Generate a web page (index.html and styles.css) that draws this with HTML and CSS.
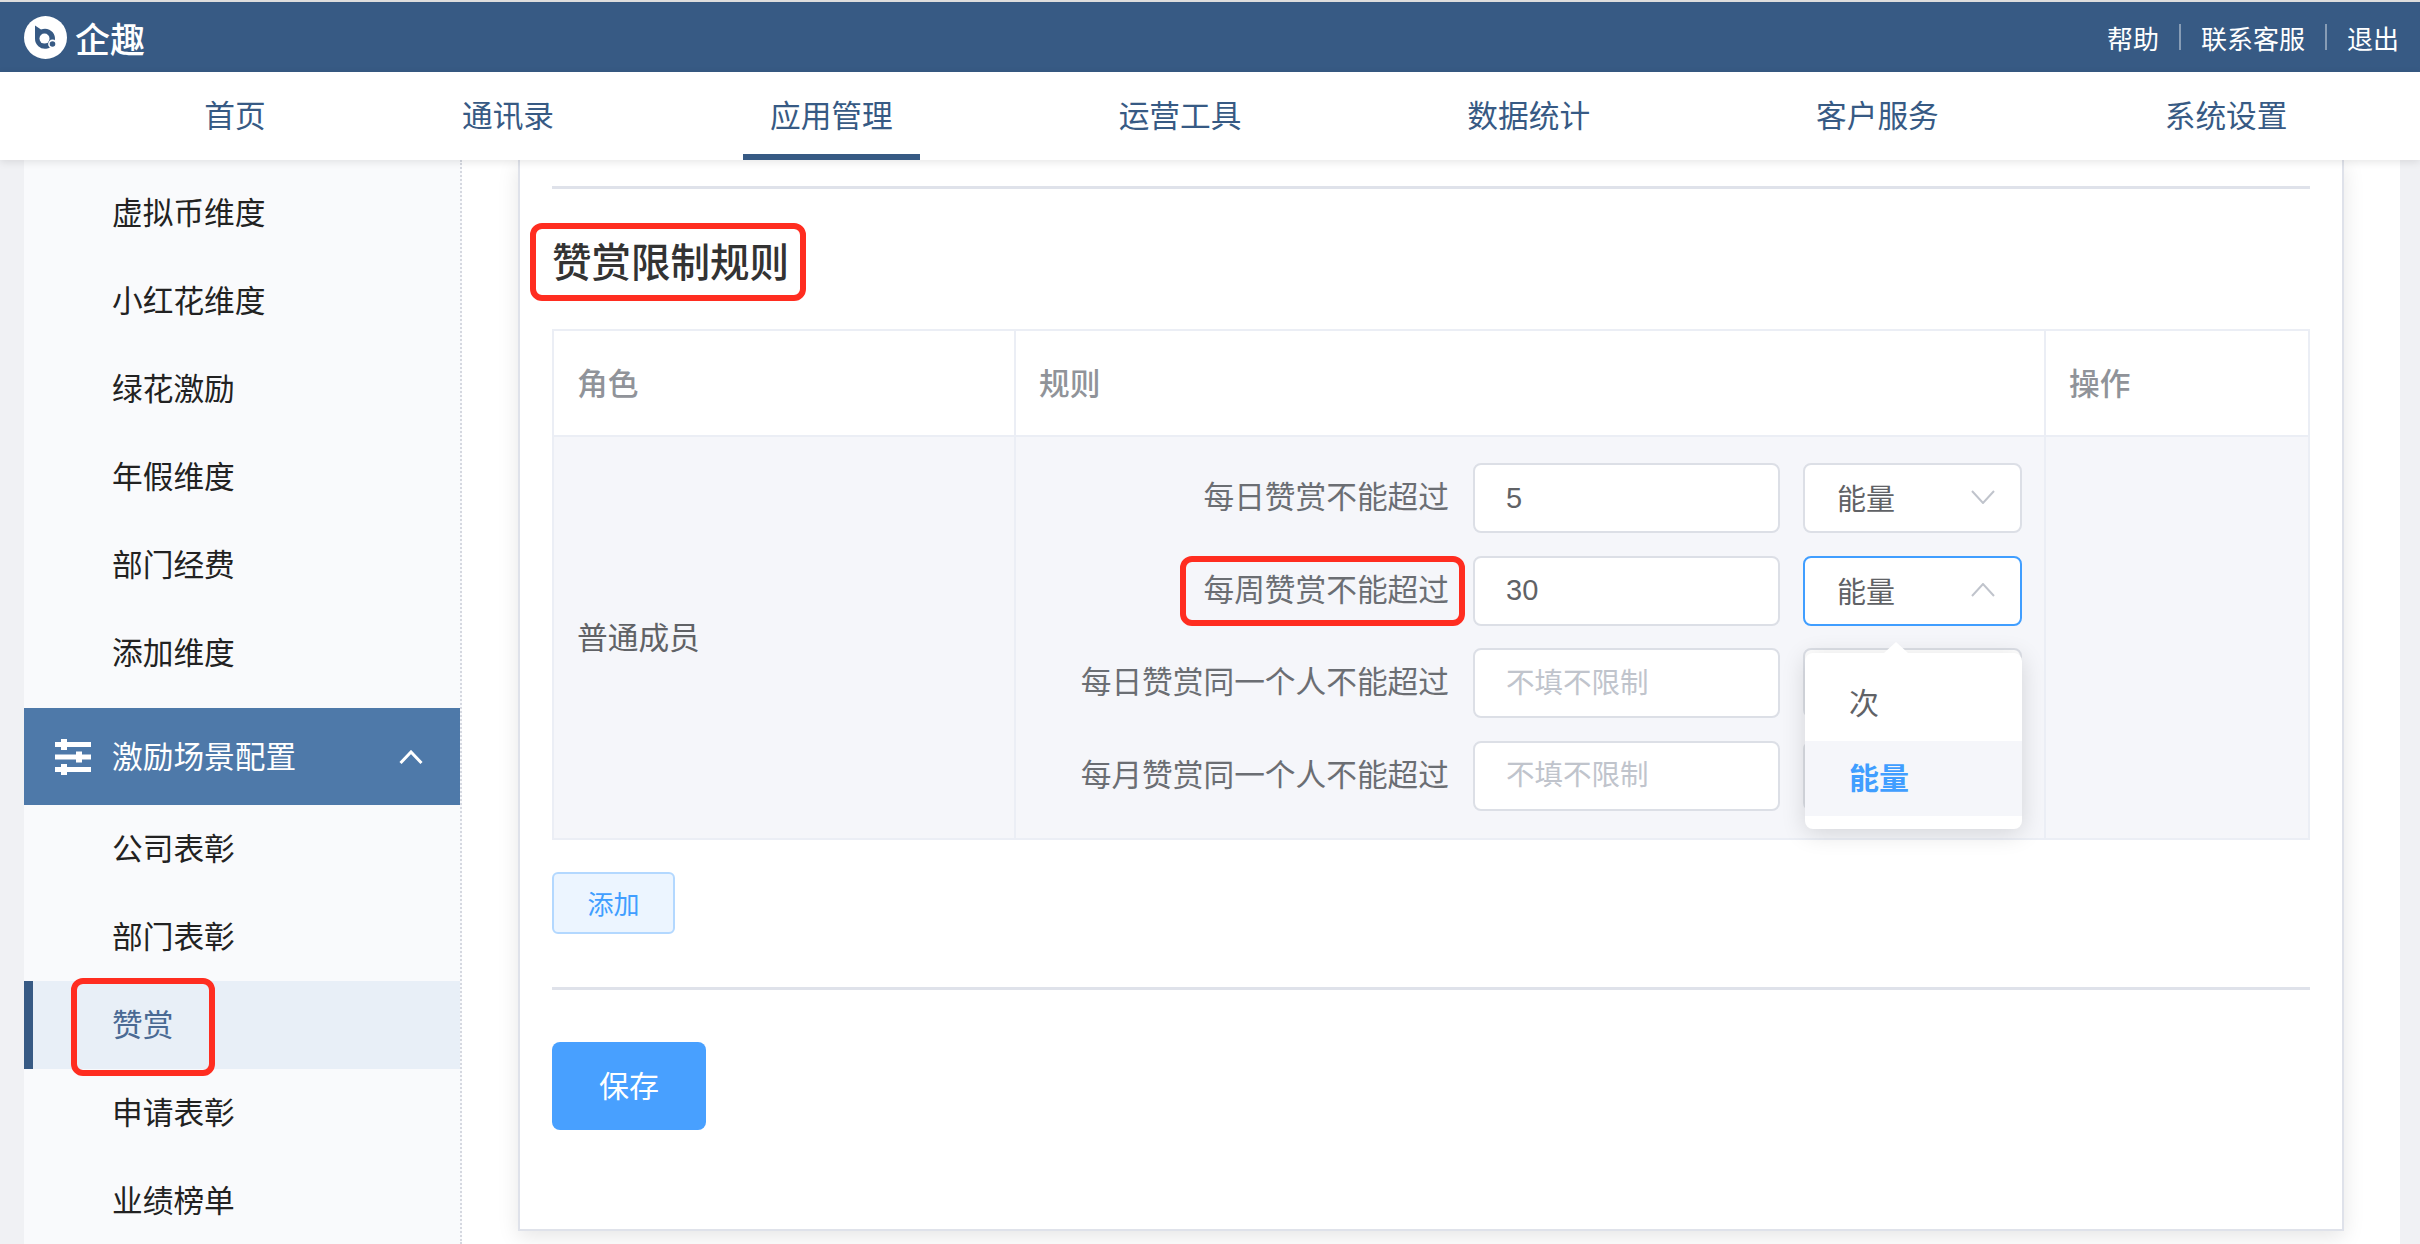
FILE: index.html
```html
<!DOCTYPE html>
<html lang="zh-CN">
<head>
    <meta charset="UTF-8">
    <title>企趣 - 应用管理</title>
    <link rel="stylesheet" href="styles.css">
</head>
<body>

<!-- Top bar -->
<div class="topbar">
    <div class="logo">
        <svg class="logo-icon" width="43" height="43" viewBox="0 0 43 43">
            <circle cx="21.5" cy="21.5" r="21.5" fill="#fff"/>
            <path d="M11 9.5 L17 13.6 A10 10 0 1 1 11 22.6 Z" fill="#375a84"/>
            <circle cx="20.5" cy="22.6" r="5" fill="#fff"/>
            <circle cx="28.5" cy="28" r="3.6" fill="#375a84" stroke="#fff" stroke-width="1.6"/>
        </svg>
        <span class="logo-text">企趣</span>
    </div>
    <div class="top-links">
        <a>帮助</a>
        <i class="top-sep"></i>
        <a>联系客服</a>
        <i class="top-sep"></i>
        <a>退出</a>
    </div>
</div>

<!-- Main nav -->
<div class="nav">
    <a class="nav-item">首页</a>
    <a class="nav-item">通讯录</a>
    <a class="nav-item active">应用管理</a>
    <a class="nav-item">运营工具</a>
    <a class="nav-item">数据统计</a>
    <a class="nav-item">客户服务</a>
    <a class="nav-item">系统设置</a>
</div>

<div class="layout">
    <!-- Sidebar -->
    <div class="sidebar">
        <div class="side-list first">
            <div class="side-item">虚拟币维度</div>
            <div class="side-item">小红花维度</div>
            <div class="side-item">绿花激励</div>
            <div class="side-item">年假维度</div>
            <div class="side-item">部门经费</div>
            <div class="side-item">添加维度</div>
        </div>
        <div class="side-group">
            <svg class="group-icon" width="36" height="36" viewBox="0 0 36 36" fill="#fff">
                <rect x="0" y="3" width="36" height="5"/>
                <rect x="6" y="0" width="6" height="11"/>
                <rect x="0" y="15.5" width="36" height="5"/>
                <rect x="21" y="12.5" width="6" height="11"/>
                <rect x="0" y="28" width="36" height="5"/>
                <rect x="6" y="25" width="6" height="11"/>
            </svg>
            <span class="group-text">激励场景配置</span>
            <svg class="group-arrow" width="24" height="14" viewBox="0 0 24 14" fill="none" stroke="#fff" stroke-width="3">
                <path d="M1.5 13 L12 2 L22.5 13"/>
            </svg>
        </div>
        <div class="side-list">
            <div class="side-item">公司表彰</div>
            <div class="side-item">部门表彰</div>
            <div class="side-item selected"><span class="side-mark">赞赏</span></div>
            <div class="side-item">申请表彰</div>
            <div class="side-item">业绩榜单</div>
        </div>
    </div>

    <!-- Content -->
    <div class="main">
        <div class="card">
            <hr class="line">
            <h2 class="title"><span class="title-text">赞赏限制规则</span></h2>

            <table class="rule-table">
                <thead>
                    <tr>
                        <th class="col-role">角色</th>
                        <th class="col-rule">规则</th>
                        <th class="col-op">操作</th>
                    </tr>
                </thead>
                <tbody>
                    <tr>
                        <td class="role-cell">普通成员</td>
                        <td class="rule-cell">
                            <div class="rule-row">
                                <label class="rule-label">每日赞赏不能超过</label>
                                <input class="rule-input" type="text" value="5">
                                <div class="select">
                                    <span>能量</span>
                                    <svg class="select-arrow" width="24" height="14" viewBox="0 0 24 14" fill="none" stroke="#c0c4cc" stroke-width="2">
                                        <path d="M1 1 L12 13 L23 1"/>
                                    </svg>
                                </div>
                            </div>
                            <div class="rule-row">
                                <label class="rule-label"><span class="label-mark">每周赞赏不能超过</span></label>
                                <input class="rule-input" type="text" value="30">
                                <div class="select open">
                                    <span>能量</span>
                                    <svg class="select-arrow" width="24" height="14" viewBox="0 0 24 14" fill="none" stroke="#c0c4cc" stroke-width="2">
                                        <path d="M1 13 L12 1 L23 13"/>
                                    </svg>
                                    <!-- Dropdown for the open select -->
                                    <div class="dropdown">
                                        <div class="option">次</div>
                                        <div class="option current">能量</div>
                                    </div>
                                </div>
                            </div>
                            <div class="rule-row">
                                <label class="rule-label">每日赞赏同一个人不能超过</label>
                                <input class="rule-input" type="text" placeholder="不填不限制">
                                <div class="select"></div>
                            </div>
                            <div class="rule-row">
                                <label class="rule-label">每月赞赏同一个人不能超过</label>
                                <input class="rule-input" type="text" placeholder="不填不限制">
                                <div class="select"></div>
                            </div>
                        </td>
                        <td></td>
                    </tr>
                </tbody>
            </table>

            <button class="add-btn">添加</button>
            <hr class="line light">
            <button class="save-btn">保存</button>
        </div>
    </div>
</div>

</body>
</html>
```

FILE: styles.css
```css
* {
    box-sizing: border-box;
}

html, body {
    height: 1244px;
    overflow: hidden;
}

body {
    margin: 0;
    background-color: #f0f1f4;
    font-family: "Liberation Sans", "Noto Sans CJK SC", sans-serif;
    font-size: 30.7px;
    color: #222;
}

/* Top bar */
.topbar {
    height: 72px;
    border-top: 2px solid #ddd;
    background-color: #375a84;
    display: flex;
    align-items: center;
    justify-content: space-between;
    padding: 0 21px 0 24px;
    color: #fff;
}

.logo {
    display: flex;
    align-items: center;
    gap: 8px;
}

.logo-text {
    font-size: 35px;
    font-weight: 500;
}

.top-links {
    display: flex;
    align-items: center;
    gap: 20px;
    font-size: 26px;
}

.top-sep {
    width: 2px;
    height: 26px;
    background-color: rgba(255, 255, 255, 0.4);
}

/* Main nav */
.nav {
    position: relative;
    z-index: 2;
    height: 88px;
    background-color: #fff;
    box-shadow: 0 2px 8px rgba(0, 0, 0, 0.1);
    display: grid;
    grid-template-columns: 248px 298px repeat(5, 348.7px);
    padding-left: 111px;
    color: #375a84;
}

.nav-item {
    justify-self: center;
    height: 88px;
    line-height: 90px;
    padding: 0 27px;
}

.nav-item.active {
    border-bottom: 6px solid #375a84;
}

/* Sidebar */
.layout {
    display: flex;
    height: 1084px;
    padding: 0 20px 0 24px;
}

.sidebar {
    width: 438px;
    flex-shrink: 0;
    background-color: #f9fafc;
    border-right: 2px dotted #d5d8e0;
}

.side-list.first {
    padding-top: 9px;
    margin-bottom: 11px;
}

.side-item {
    height: 88px;
    line-height: 90px;
    padding-left: 88px;
}

.side-item.selected {
    padding-left: 79px;
    background-color: #e8eff7;
    border-left: 9px solid #375a84;
    color: #4a6a94;
}

.side-mark {
    position: relative;
    display: inline-block;
}

.side-mark::after {
    content: "";
    position: absolute;
    top: -3px;
    bottom: -5px;
    left: -41px;
    right: -42px;
    border: 6px solid #ff2d20;
    border-radius: 12px;
}

.side-group {
    height: 97px;
    background-color: #4e79a9;
    color: #fff;
    display: flex;
    align-items: center;
    padding: 0 37px 0 31px;
}

.group-icon {
    margin-right: 21px;
}

.group-text {
    padding-bottom: 4px;
}

.group-arrow {
    margin-left: auto;
}

/* Content */
.main {
    flex: 1;
    background-color: #fff;
    padding: 0 56px 0 56px;
}

.card {
    height: 1071px;
    background-color: #fff;
    border-left: 2px solid #dfe2ea;
    border-right: 2px solid #dfe2ea;
    border-bottom: 2px solid #dfe2ea;
    box-shadow: 0 6px 20px rgba(0, 0, 0, 0.1);
    padding: 26px 32px 0 32px;
}

.line {
    margin: 0;
    border: none;
    height: 3px;
    background-color: #dfe2ea;
}

.line.light {
    margin: 53px 0 52px;
}

.title {
    margin: 46px 0 38px;
    height: 56px;
    line-height: 56px;
    font-size: 39.5px;
    font-weight: 500;
    color: #333;
}

.title-text {
    position: relative;
    display: inline-block;
}

.title-text::after {
    content: "";
    position: absolute;
    top: -12px;
    bottom: -10px;
    left: -22px;
    right: -17px;
    border: 6px solid #ff2d20;
    border-radius: 12px;
}

/* Rule table */
.rule-table {
    width: 100%;
    border-collapse: collapse;
    table-layout: fixed;
    border: 2px solid #ebeef5;
}

.rule-table th,
.rule-table td {
    border: 2px solid #ebeef5;
    padding: 0 0 0 23px;
    text-align: left;
    color: #606266;
}

.rule-table th {
    height: 106px;
    padding-bottom: 4px;
    background-color: #fff;
    color: #909399;
    font-weight: 500;
}

.rule-table td {
    background-color: #f5f6fa;
}

.rule-table td.role-cell {
    padding-bottom: 4px;
}

.col-role {
    width: 462px;
}

.col-op {
    width: 264px;
}

.rule-table td.rule-cell {
    padding: 26px 22px 27px 0;
}

.rule-row {
    display: flex;
    align-items: center;
    gap: 23px;
    height: 70px;
    margin-bottom: 22.5px;
}

.rule-row:last-child {
    margin-bottom: 0;
}

.rule-label {
    flex: 1;
    text-align: right;
    line-height: 70px;
    color: #6b6e73;
    margin-right: 1px;
}

.label-mark {
    position: relative;
    display: inline-block;
}

.label-mark::after {
    content: "";
    position: absolute;
    top: 0;
    bottom: 0;
    left: -23px;
    right: -16px;
    border: 6px solid #ff2d20;
    border-radius: 12px;
}

.rule-input {
    width: 307px;
    height: 70px;
    padding: 0 31px;
    border: 2px solid #dcdfe6;
    border-radius: 8px;
    background-color: #fff;
    font: inherit;
    font-size: 29px;
    color: #606266;
}

.rule-input::placeholder {
    color: #c0c4cc;
    font-size: 28.5px;
}

.select {
    position: relative;
    width: 219px;
    height: 70px;
    padding: 0 25px 2px 32px;
    border: 2px solid #dcdfe6;
    border-radius: 8px;
    background-color: #fff;
    color: #606266;
    font-size: 29px;
    display: flex;
    align-items: center;
    justify-content: space-between;
}

.select.open {
    border-color: #409eff;
}

.dropdown {
    position: absolute;
    z-index: 3;
    top: 95px;
    left: 0;
    width: 217px;
    padding: 13px 0;
    background-color: #fff;
    border-radius: 8px;
    box-shadow: 0 4px 24px rgba(0, 0, 0, 0.14);
    font-size: 30px;
}

.dropdown::before {
    content: "";
    position: absolute;
    top: -11px;
    left: 79px;
    border-left: 12px solid transparent;
    border-right: 12px solid transparent;
    border-bottom: 11px solid #fff;
}

.option {
    height: 75px;
    line-height: 75px;
    padding-left: 44px;
}

.option.current {
    background-color: #f5f6fa;
    color: #409eff;
    font-weight: 700;
}

/* Buttons */
.add-btn {
    display: block;
    width: 123px;
    height: 62px;
    margin-top: 32px;
    border: 2px solid #b3d8ff;
    border-radius: 6px;
    background-color: #ecf5ff;
    color: #409eff;
    font: inherit;
    font-size: 26px;
}

.save-btn {
    display: block;
    width: 154px;
    height: 88px;
    padding: 0 0 4px;
    border: none;
    border-radius: 8px;
    background-color: #48a0ff;
    color: #fff;
    font: inherit;
    font-size: 30px;
}
```
